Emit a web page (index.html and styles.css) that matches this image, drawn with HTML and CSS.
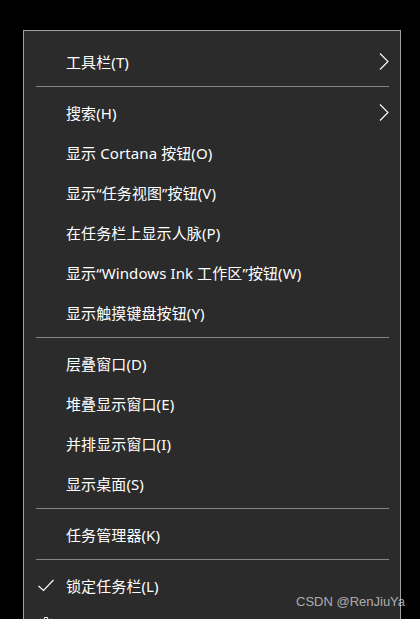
FILE: index.html
```html
<!DOCTYPE html>
<html lang="zh-CN">
<head>
    <meta charset="UTF-8">
    <meta name="viewport" content="width=device-width, initial-scale=1.0">
    <link rel="stylesheet" href="styles.css">
</head>
<body>
    <div class="menu">
        <div class="item">
            <span class="icon"></span>
            <span class="label">工具栏(T)</span>
            <svg class="arrow" width="10" height="17" viewBox="0 0 10 17"><path d="M1 0.5 L9 8.5 L1 16.5" fill="none" stroke="#fff" stroke-width="1.1"/></svg>
        </div>
        <div class="sep"></div>
        <div class="item">
            <span class="icon"></span>
            <span class="label">搜索(H)</span>
            <svg class="arrow" width="10" height="17" viewBox="0 0 10 17"><path d="M1 0.5 L9 8.5 L1 16.5" fill="none" stroke="#fff" stroke-width="1.1"/></svg>
        </div>
        <div class="item"><span class="icon"></span><span class="label">显示 Cortana 按钮(O)</span></div>
        <div class="item"><span class="icon"></span><span class="label">显示“任务视图”按钮(V)</span></div>
        <div class="item"><span class="icon"></span><span class="label">在任务栏上显示人脉(P)</span></div>
        <div class="item"><span class="icon"></span><span class="label">显示“Windows Ink 工作区”按钮(W)</span></div>
        <div class="item"><span class="icon"></span><span class="label">显示触摸键盘按钮(Y)</span></div>
        <div class="sep"></div>
        <div class="item"><span class="icon"></span><span class="label">层叠窗口(D)</span></div>
        <div class="item"><span class="icon"></span><span class="label">堆叠显示窗口(E)</span></div>
        <div class="item"><span class="icon"></span><span class="label">并排显示窗口(I)</span></div>
        <div class="item"><span class="icon"></span><span class="label">显示桌面(S)</span></div>
        <div class="sep"></div>
        <div class="item"><span class="icon"></span><span class="label">任务管理器(K)</span></div>
        <div class="sep"></div>
        <div class="item">
            <span class="icon">
                <svg width="16" height="16" viewBox="0 0 16 16"><path d="M0.5 9 L5.5 13.5 L15.5 3" fill="none" stroke="#fff" stroke-width="1.1"/></svg>
            </span>
            <span class="label">锁定任务栏(L)</span>
        </div>
        <div class="item">
            <span class="icon">
                <svg width="16" height="16" viewBox="0 0 16 16"><path d="M6.5 0.5h3l0.5 2.2 1.6 0.7 1.9-1.2 2.1 2.1-1.2 1.9 0.7 1.6 2.2 0.5v3l-2.2 0.5-0.7 1.6 1.2 1.9-2.1 2.1-1.9-1.2-1.6 0.7-0.5 2.2h-3l-0.5-2.2-1.6-0.7-1.9 1.2-2.1-2.1 1.2-1.9-0.7-1.6-2.2-0.5v-3l2.2-0.5 0.7-1.6-1.2-1.9 2.1-2.1 1.9 1.2 1.6-0.7z" fill="none" stroke="#fff" stroke-width="1"/><circle cx="8" cy="8" r="2.5" fill="none" stroke="#fff" stroke-width="1"/></svg>
            </span>
        </div>
    </div>
    <div class="watermark">CSDN @RenJiuYa</div>
</body>
</html>
```

FILE: styles.css
```css
html, body {
    margin: 0;
    padding: 0;
    height: 100%;
    overflow: hidden;
}

body {
    background-color: #000;
    font-family: "Noto Sans", "Noto Sans CJK SC", sans-serif;
    color: #fff;
    position: relative;
}

.menu {
    box-sizing: border-box;
    width: 378px;
    margin: 30px 0 0 23px;
    padding-top: 10px;
    background-color: #2b2b2b;
    border: 1px solid #a0a0a0;
    border-bottom: none;
}

.item {
    display: flex;
    align-items: center;
    height: 40px;
    padding: 0 11px 0 14px;
    font-size: 15px;
}

.icon {
    display: flex;
    width: 28px;
    flex-shrink: 0;
}

.label {
    flex: 1;
    white-space: nowrap;
    letter-spacing: 0.1px;
}

.arrow {
    display: block;
}

.sep {
    height: 1px;
    margin: 5px 11px 5px 12px;
    background-color: #858585;
}

.watermark {
    position: absolute;
    left: 296px;
    top: 594px;
    font-family: "Liberation Sans", sans-serif;
    font-size: 13px;
    color: rgba(255, 255, 255, 0.62);
    white-space: nowrap;
}
```
